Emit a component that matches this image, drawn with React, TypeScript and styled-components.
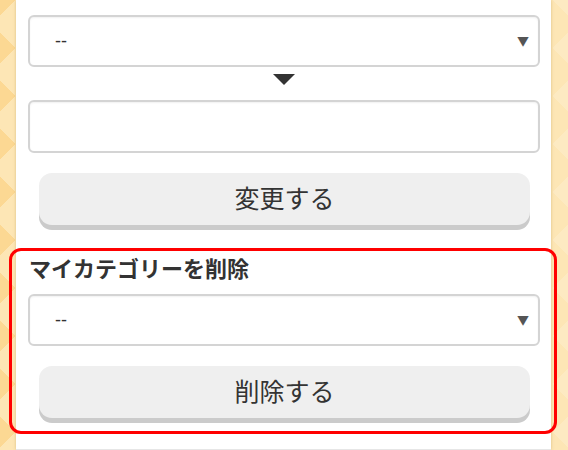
import React from 'react';
import styled, { createGlobalStyle } from 'styled-components';

const GlobalStyle = createGlobalStyle`
  html, body {
    margin: 0;
    padding: 0;
  }
  body {
    width: 568px;
    height: 450px;
    overflow: hidden;
    font-family: "Noto Sans CJK JP", "Noto Sans", sans-serif;
    color: #333;
    background-color: #fde6b5;
    background-image:
      linear-gradient(135deg, #fcd893 25%, transparent 25%),
      linear-gradient(45deg, #fcd893 25%, transparent 25%),
      linear-gradient(315deg, #fdeac2 25%, transparent 25%),
      linear-gradient(225deg, #fdeac2 25%, transparent 25%);
    background-size: 48px 48px;
    background-position: -8px 0, -8px 0, 0 0, 0 0;
  }
`;

const Page = styled.div`
  padding: 0 17px 0 16px;
`;

const Panel = styled.div`
  background: #fff;
  padding: 15px 11px 0 12px;
  height: 434px;
  box-shadow: 0 0 3px rgba(160, 120, 40, 0.35);
  border-bottom: 1px solid #e6e6e6;
`;

const SelectWrap = styled.div`
  position: relative;
`;

const Select = styled.select`
  appearance: none;
  display: block;
  width: 100%;
  height: 52px;
  box-sizing: border-box;
  padding: 0 40px 0 25px;
  border: 2px solid #d4d4d4;
  border-radius: 6px;
  background: #fff;
  box-shadow: inset 0 1px 2px rgba(0, 0, 0, 0.06);
  font-family: "Liberation Sans", "Noto Sans CJK JP", sans-serif;
  font-size: 18px;
  color: #333;
  outline: none;
`;

const Caret = styled.span`
  position: absolute;
  right: 11px;
  top: 50%;
  transform: translateY(-50%);
  font-size: 12px;
  line-height: 1;
  color: #555;
  pointer-events: none;
`;

const DownMark = styled.div`
  width: 0;
  height: 0;
  margin: 7px auto 15px;
  border-left: 11px solid transparent;
  border-right: 11px solid transparent;
  border-top: 11px solid #333;
`;

const TextInput = styled.input`
  display: block;
  width: 100%;
  height: 53px;
  box-sizing: border-box;
  border: 2px solid #d4d4d4;
  border-radius: 6px;
  box-shadow: inset 0 1px 2px rgba(0, 0, 0, 0.06);
  outline: none;
  font-size: 16px;
`;

const Button = styled.button<{ $top: number }>`
  display: block;
  width: 491px;
  height: 52px;
  margin: ${(p) => p.$top}px 0 0 11px;
  padding: 0 0 5px;
  border: none;
  border-radius: 13px;
  background: #efefef;
  box-shadow: 0 5px 0 #cbcbcb;
  font-family: "Noto Sans CJK JP", sans-serif;
  font-size: 25px;
  color: #333;
  cursor: pointer;
`;

const Highlight = styled.section`
  margin: 23px -17px 0 -19px;
  padding: 1px 14px 0 16px;
  height: 179px;
  border: 3px solid #ff0000;
  border-radius: 12px;
`;

const Title = styled.h3`
  margin: 0 0 12px 1px;
  font-size: 22px;
  line-height: 30px;
  font-weight: 700;
  color: #333;
`;

const Dropdown: React.FC = () => (
  <SelectWrap>
    <Select defaultValue="">
      <option value="">--</option>
    </Select>
    <Caret>▼</Caret>
  </SelectWrap>
);

export default function App() {
  return (
    <>
      <GlobalStyle />
      <Page>
        <Panel>
          <Dropdown />
          <DownMark />
          <TextInput type="text" />
          <Button $top={20}>変更する</Button>
          <Highlight>
            <Title>マイカテゴリーを削除</Title>
            <Dropdown />
            <Button $top={20}>削除する</Button>
          </Highlight>
        </Panel>
      </Page>
    </>
  );
}
